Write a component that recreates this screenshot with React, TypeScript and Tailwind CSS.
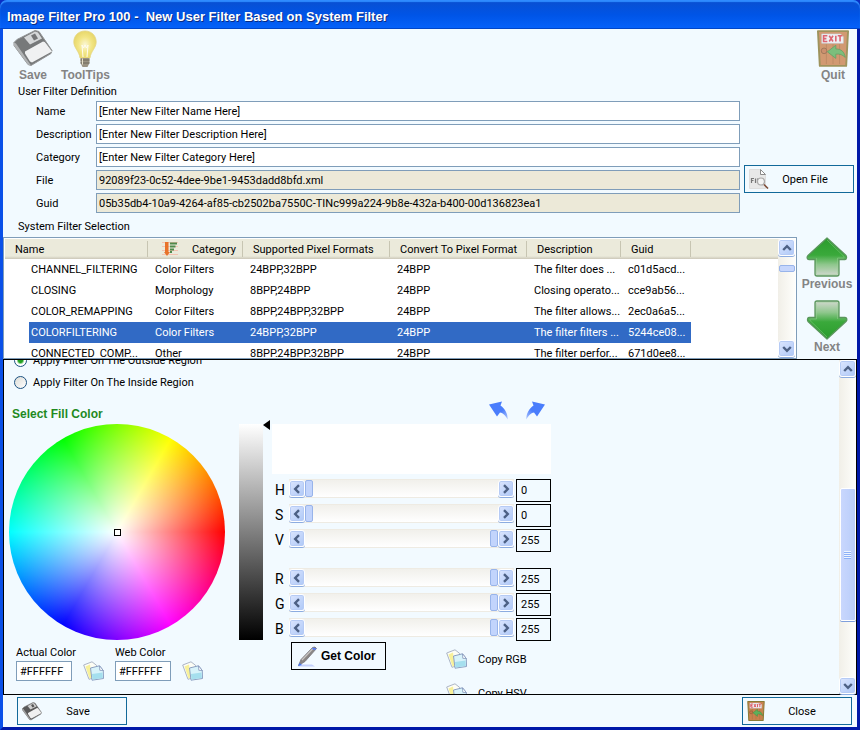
import { useState, type ReactNode } from 'react'

const filters = [
  ['CHANNEL_FILTERING', 'Color Filters', '24BPP,32BPP', '24BPP', 'The filter does ...', 'c01d5acd...'],
  ['CLOSING', 'Morphology', '8BPP,24BPP', '24BPP', 'Closing operato...', 'cce9ab56...'],
  ['COLOR_REMAPPING', 'Color Filters', '8BPP,24BPP,32BPP', '24BPP', 'The filter allows...', '2ec0a6a5...'],
  ['COLORFILTERING', 'Color Filters', '24BPP,32BPP', '24BPP', 'The filter filters ...', '5244ce08...'],
  ['CONNECTED_COMP...', 'Other', '8BPP,24BPP,32BPP', '24BPP', 'The filter perfor...', '671d0ee8...'],
]

const fields = [
  { id: 'name', label: 'Name', value: '[Enter New Filter Name Here]' },
  { id: 'description', label: 'Description', value: '[Enter New Filter Description Here]' },
  { id: 'category', label: 'Category', value: '[Enter New Filter Category Here]' },
  { id: 'file', label: 'File', value: '92089f23-0c52-4dee-9be1-9453dadd8bfd.xml', readOnly: true },
  { id: 'guid', label: 'Guid', value: '05b35db4-10a9-4264-af85-cb2502ba7550C-TINc999a224-9b8e-432a-b400-00d136823ea1', readOnly: true },
]

function FloppyIcon({ className }: { className: string }) {
  return (
    <svg viewBox="0 0 40 38" className={className}>
      <path d="M1 13 4 10 22 1l4 1 13 19-1 3-20 12-3-1L1 16Z" fill="#595959" stroke="#7c7c7c" strokeWidth="1" strokeLinejoin="round" />
      <path d="M1 13v3l14 19 3 1L3 14Z" fill="#a2a2a2" />
      <path d="m11 8 11-6 3 1 4 6-12 6Z" fill="#cfcfcf" />
      <path d="m18 6 4-2 3 5-4 2Z" fill="#555" />
      <path d="m12 22 18-10q2 0 3 2l6 8-20 11-2-1-5-8Z" fill="#f0f0f0" />
    </svg>
  )
}

function BulbIcon() {
  return (
    <svg viewBox="0 0 24 38" className="h-[38px] w-6">
      <defs>
        <radialGradient id="bulb" cx="50%" cy="52%" r="55%">
          <stop offset="0" stopColor="#fbf7d8" />
          <stop offset=".55" stopColor="#f2e583" />
          <stop offset="1" stopColor="#e6d568" />
        </radialGradient>
      </defs>
      <path d="M12 1C5 1 .8 6 .8 12c0 6 5.400 9 6.200 16h10c.8-7 6.200-10 6.200-16C23.200 6 19 1 12 1Z" fill="url(#bulb)" stroke="#e4d682" strokeWidth=".8" />
      <path d="M10 27 9 15l1.500 3L12 15l1.500 3 1.500-3-1 12" fill="none" stroke="#fffdf0" strokeWidth="1" />
      <path d="M7.500 28h9v5l-2 4h-5l-2-4Z" fill="#9a9383" />
      <path d="M7.500 30h9M7.500 33h9" stroke="#6f685a" />
      <path d="M9.500 28.500v6" stroke="#e6dfc8" />
    </svg>
  )
}

function ExitIcon({ className }: { className: string }) {
  return (
    <svg viewBox="0 0 34 39" className={className}>
      <path d="M1 1h32l-2 37H3Z" fill="#c9824f" stroke="#8a7a35" strokeWidth="2" strokeLinejoin="round" />
      <path d="M10 15v21M17 15v21M24 15v21" stroke="#b06f40" />
      <path d="M5 4h20l3 3v7H5Z" fill="#eef0f2" stroke="#b9c3cc" strokeWidth=".6" />
      <path d="M11 6H7v6h4M7 9h3M13 6l4 6M17 6l-4 6M20 6v6M22 6h5M24.500 6v6" fill="none" stroke="#d9414f" strokeWidth="1.700" />
      <circle cx="7.500" cy="22" r="3" fill="#c2764a" stroke="#8b5733" />
      <path d="m11 23 9-7v4c6 0 9 3 10 9-3-3-6-4-10-3.500V30Z" fill="#5fb05c" stroke="#3c8a3d" strokeWidth=".8" />
    </svg>
  )
}

function FileSearchIcon() {
  return (
    <svg viewBox="0 0 20 20" className="size-5">
      <path d="M.5.500h11l5 5v14H.5Z" fill="#e8e8e8" stroke="#dedede" />
      <path d="M11.500.500v5h5Z" fill="#fff" stroke="#8b8b8b" />
      <path d="M5 9.500H2.500V14M2.500 11.500H4.500M6.500 9.500V14M8.500 9.500v4.500" fill="none" stroke="#777" strokeWidth="1.200" />
      <circle cx="12" cy="12.500" r="3.500" fill="#f4f4f4" stroke="#aaa" strokeWidth="1.200" />
      <path d="m15 15.500 4 4" stroke="#7c4a35" strokeWidth="1.600" />
    </svg>
  )
}

function CopyIcon() {
  return (
    <svg viewBox="0 0 21 20" className="h-5 w-[21px]">
      <path d="M.7 4 9 .8l4.500 3.500 1 11-8.500 3Z" fill="#fdfdf5" stroke="#a3adc0" strokeWidth=".9" />
      <path d="m2.500 5.500 4.500-2 1.500 13.500-2 .5Z" fill="#f8f19a" />
      <path d="m7.500 7 9-2.200 3.800 4.700.2 8-11.500 1.700Z" fill="#d8f3fa" stroke="#8296bb" strokeWidth=".9" />
      <path d="m9 13 10.500-1.500.3 5.500-10.300 1.600Z" fill="#a5dfee" />
      <path d="m16.500 4.800.3 4.500 3.500.2Z" fill="#fff" stroke="#8296bb" strokeWidth=".8" />
    </svg>
  )
}

function GreenArrow({ down = false }: { down?: boolean }) {
  return (
    <svg viewBox="0 0 42 40" className={down ? 'h-10 w-[42px] rotate-180' : 'h-10 w-[42px]'}>
      <defs>
        <linearGradient id="arrow" x1="0" y1="0" x2="0" y2="1">
          <stop offset="0" stopColor="#2a9c2c" />
          <stop offset=".45" stopColor="#3aa93b" />
          <stop offset=".7" stopColor="#8fc78d" />
          <stop offset="1" stopColor="#d3d8d0" />
        </linearGradient>
      </defs>
      <path d="M21 1 40 18.500c1 1.500.5 4-1 4h-6V37q0 2-2 2H11q-2 0-2-2V22.500H3c-2 0-2.500-2.500-1-4Z" fill="url(#arrow)" stroke="#5a965c" strokeWidth="1.300" strokeLinejoin="round" />
      <path d="M21 3 38 19.500c.3.800 0 1.500-.6 1.500H31.500V36.500q0 1-1 1h-19q-1 0-1-1V21" fill="none" stroke="#9fd29b" strokeWidth=".7" opacity=".6" />
    </svg>
  )
}

function CurvedArrow({ flip = false }: { flip?: boolean }) {
  return (
    <svg viewBox="0 0 20 19" className={flip ? 'h-[19px] w-5 -scale-x-100' : 'h-[19px] w-5'}>
      <defs>
        <linearGradient id="curve" x1="0" y1="0" x2="1" y2="1">
          <stop offset=".6" stopColor="#4a7dfc" />
          <stop offset="1" stopColor="#b4c9fb" />
        </linearGradient>
      </defs>
      <path d="M0 3.500 13 .5 11.500 4.500C16 8 18.700 12 18.700 18.500 16.500 14.500 13.500 11.500 11 11.500L8 15.500Z" fill="url(#curve)" />
    </svg>
  )
}

function PenIcon() {
  return (
    <svg viewBox="0 0 21 21" className="size-[21px]">
      <path d="M1 20.500h17l-3-2H3Z" fill="#c3d0fc" />
      <path d="M1.500 19.500 4 13.500 15.500 1.500q3-1.500 4 1L8 15.500Z" fill="#8a8684" stroke="#77767c" strokeWidth=".8" />
      <path d="m5 14 11-11.500" stroke="#c9c6c4" strokeWidth="1.200" />
      <path d="M1 20 2.500 17l2.500 2Z" fill="#4674f0" />
      <path d="m16 1.500 3.500 1-1.500 1.800-3-1.300Z" fill="#5b7ef0" />
    </svg>
  )
}

function SortIcon() {
  return (
    <svg viewBox="0 0 16 16" className="h-4 w-4">
      <path d="M0 1.500h16M0 5.500h16M0 9.500h16M0 13.500h16" stroke="#f3c3b0" />
      <path d="M3 1h3.500v10H8l-3 4-3-4h1Z" fill="#e8722a" />
      <path d="M8 2.500h7M8 5.500h5.500M8 8.500h4M8 11h2" stroke="#4f8a4c" strokeWidth="1.800" />
    </svg>
  )
}

function Chevron({ className = '' }: { className?: string }) {
  return (
    <svg viewBox="0 0 10 10" className={`size-[10px] ${className}`}>
      <path d="m1.200 7 3.800-3.800L8.800 7" fill="none" stroke="#4d6185" strokeWidth="2.400" />
    </svg>
  )
}

function ScrollButton({ label, turn }: { label: string; turn?: string }) {
  return (
    <button
      aria-label={label}
      className="flex size-[17px] shrink-0 items-center justify-center rounded-[3px] border border-white bg-linear-to-br from-[#dce6fe] to-[#aec8f7] shadow-[inset_0_0_0_1px_#b6cbf5,0_1px_0_#8cace0]"
    >
      <Chevron className={turn} />
    </button>
  )
}

function ScrollTrack({ children }: { children: ReactNode }) {
  return (
    <div className="flex w-[17px] shrink-0 flex-col items-center bg-linear-to-r from-[#f1efe8] to-[#fefefb]">
      <ScrollButton label="Scroll up" />
      {children}
      <ScrollButton label="Scroll down" turn="rotate-180" />
    </div>
  )
}

function ToolButton({ label, children }: { label: string; children: ReactNode }) {
  return (
    <button className="flex flex-col items-center font-['Liberation_Sans',Arial,sans-serif] text-[12px] leading-[15px] font-bold text-[#848484]">
      {children}
      {label}
    </button>
  )
}

function ActionButton({ label, children }: { label: string; children: ReactNode }) {
  return (
    <button className="flex h-7 w-[110px] items-center border border-[#12699a] pl-1">
      {children}
      <span className="flex-1 pr-3 text-center">{label}</span>
    </button>
  )
}

function Channel({ name, initial, max = 255 }: { name: string; initial: number; max?: number }) {
  const [value, setValue] = useState(initial)
  const set = (v: number) => setValue(Math.max(0, Math.min(max, v || 0)))
  return (
    <div className="flex h-[23px] items-start">
      <label htmlFor={`value-${name}`} className="w-[17px] pl-[3px] text-[14px] leading-[23px]">{name}</label>
      <div className="flex flex-1 items-center border-y border-[#eeebe3] bg-linear-to-b from-[#f1f0eb] to-white">
        <button aria-label={`Decrease ${name}`} onClick={() => set(value - 1)} className="flex h-[17px] w-4 items-center justify-center rounded-[3px] border border-white bg-linear-to-br from-[#dce6fe] to-[#aec8f7] shadow-[inset_0_0_0_1px_#b6cbf5,0_1px_0_#8cace0]">
          <Chevron className="-rotate-90" />
        </button>
        <input
          type="range"
          aria-label={`${name} slider`}
          min={0}
          max={max}
          value={value}
          onChange={(e) => set(+e.target.value)}
          className="h-[17px] min-w-0 flex-1 appearance-none bg-transparent [&::-webkit-slider-thumb]:h-[17px] [&::-webkit-slider-thumb]:w-[8px] [&::-webkit-slider-thumb]:appearance-none [&::-webkit-slider-thumb]:rounded-[2px] [&::-webkit-slider-thumb]:border [&::-webkit-slider-thumb]:border-[#98b4ea] [&::-webkit-slider-thumb]:bg-[#c2d4fc]"
        />
        <button aria-label={`Increase ${name}`} onClick={() => set(value + 1)} className="flex h-[17px] w-4 items-center justify-center rounded-[3px] border border-white bg-linear-to-br from-[#dce6fe] to-[#aec8f7] shadow-[inset_0_0_0_1px_#b6cbf5,0_1px_0_#8cace0]">
          <Chevron className="rotate-90" />
        </button>
      </div>
      <input
        id={`value-${name}`}
        value={value}
        onChange={(e) => set(+e.target.value)}
        className="ml-[2px] h-[23px] w-[35px] border border-black px-1"
      />
    </div>
  )
}

function HexField({ id, label }: { id: string; label: string }) {
  return (
    <div className="w-[99px]">
      <label htmlFor={id} className="block leading-[17px] whitespace-nowrap">{label}</label>
      <div className="flex items-center gap-[11px]">
        <input id={id} defaultValue="#FFFFFF" className="h-5 w-14 border border-[#7f9db9] bg-white px-[3px]" />
        <button aria-label={`Copy ${label}`}><CopyIcon /></button>
      </div>
    </div>
  )
}

function FilterTable() {
  const [selected, setSelected] = useState(3)
  return (
    <div className="flex h-[122px] min-w-0 flex-1 border border-[#7f9db9] bg-white p-px">
      <div className="min-w-0 flex-1 overflow-hidden bg-[linear-gradient(#ebeadb_0_17px,#cbc7b8_20px,#fff_20px)]">
        <table className="w-[686px] table-fixed border-collapse text-left whitespace-nowrap">
          <colgroup>
            <col className="w-6" />
            <col className="w-[119px]" />
            <col className="w-[95px]" />
            <col className="w-[147px]" />
            <col className="w-[137px]" />
            <col className="w-[94px]" />
            <col className="w-[70px]" />
          </colgroup>
          <thead>
            <tr className="h-5 [&_span]:flex [&_span]:h-4 [&_span]:items-center [&_span]:border-r [&_span]:border-[#c7c5b2] [&_span]:pl-[10px] [&_th]:p-0 [&_th]:font-normal">
              <th colSpan={2}><span>Name</span></th>
              <th><span className="justify-between pr-[6px]"><i className="pl-1"><SortIcon /></i>Category</span></th>
              <th><span>Supported Pixel Formats</span></th>
              <th><span>Convert To Pixel Format</span></th>
              <th><span>Description</span></th>
              <th><span>Guid</span></th>
            </tr>
          </thead>
          <tbody>
            {filters.map((row, i) => (
              <tr key={row[0]} onClick={() => setSelected(i)} className="h-[21px]">
                <td className="p-0" />
                {row.map((cell, j) => (
                  <td key={j} className={`overflow-hidden py-0 pr-0 ${j === 0 ? 'pl-[2px]' : 'pl-[7px]'} ${i === selected ? 'bg-[#316ac5] text-white' : ''}`}>
                    {cell}
                  </td>
                ))}
              </tr>
            ))}
          </tbody>
        </table>
      </div>
      <ScrollTrack>
        <div className="mt-[9px] h-[7px] w-4 rounded-[2px] border border-[#98b4ea] bg-[#c6d6fc]" />
        <div className="flex-1" />
      </ScrollTrack>
    </div>
  )
}

export default function App() {
  return (
    <div className="flex h-screen flex-col overflow-hidden bg-[#0a2ec4] font-[Roboto,'Liberation_Sans',sans-serif] text-[11px] leading-[15px] text-black">
      <header className="flex h-[29px] shrink-0 items-center rounded-t-[7px] bg-linear-to-b from-[#0a4fd0] via-[#0054e6] to-[#0562fb] px-[7px] pt-1 shadow-[inset_0_2px_1px_#2f8bff,inset_0_-1px_0_#0046c8]">
        <h1 className="font-['Liberation_Sans',Arial,sans-serif] text-[13px] font-bold whitespace-pre text-white [text-shadow:1px_1px_#0a2a80]">Image Filter Pro 100 -  New User Filter Based on System Filter</h1>
      </header>

      <main className="flex min-h-0 flex-1 flex-col border-x-[3px] border-b-[3px] border-r-[#0018a8] border-b-[#0018a8] border-l-[#0a50e8] bg-[#f2faff]">
        <div className="flex h-[55px] shrink-0 justify-between pr-2 pl-[10px]">
          <div className="flex gap-2">
            <ToolButton label="Save"><FloppyIcon className="h-[39px] w-10 opacity-80" /></ToolButton>
            <ToolButton label="ToolTips"><div className="flex h-[39px] items-end"><BulbIcon /></div></ToolButton>
          </div>
          <ToolButton label="Quit"><ExitIcon className="h-[39px] w-8 opacity-80" /></ToolButton>
        </div>

        <h2 className="shrink-0 pl-[15px]">User Filter Definition</h2>
        <form className="mt-[2px] flex shrink-0 items-end gap-1 pr-[3px] pl-[33px]" onSubmit={(e) => e.preventDefault()}>
          <div className="flex flex-1 flex-col gap-[3px]">
            {fields.map((f) => (
              <div key={f.id} className="flex h-5 items-center">
                <label htmlFor={f.id} className="w-[60px]">{f.label}</label>
                <input
                  id={f.id}
                  defaultValue={f.value}
                  readOnly={f.readOnly}
                  className="h-5 flex-1 border border-[#7f9db9] bg-white px-[2px] read-only:bg-[#ece9d8]"
                />
              </div>
            ))}
          </div>
          <div className="mb-5">
            <ActionButton label="Open File"><FileSearchIcon /></ActionButton>
          </div>
        </form>

        <h2 className="mt-[6px] shrink-0 pb-[3px] pl-[15px]">System Filter Selection</h2>
        <section className="flex shrink-0">
          <FilterTable />
          <div className="flex w-[60px] flex-col items-center gap-2">
            <ToolButton label="Previous"><GreenArrow /></ToolButton>
            <ToolButton label="Next"><GreenArrow down /></ToolButton>
          </div>
        </section>

        <section className="flex min-h-0 flex-1 border border-black">
          <div className="min-w-0 flex-1 overflow-hidden">
            <fieldset className="-mt-[11px] pl-[10px]">
              {['Outside', 'Inside'].map((side) => (
                <label key={side} className="flex h-[22px] items-center gap-[6px]">
                  <input
                    type="radio"
                    name="region"
                    defaultChecked={side === 'Outside'}
                    className="size-[13px] appearance-none rounded-full border border-[#1d5281] bg-linear-to-br from-[#dcdcd7] to-white checked:bg-[radial-gradient(circle,#21a121_0_2px,#fff_4px)]"
                  />
                  Apply Filter On The {side} Region
                </label>
              ))}
            </fieldset>

            <div className="mt-2 flex pl-[5px]">
              <div className="w-[216px]">
                <h3 className="h-[23px] pt-[6px] pl-[3px] font-['Liberation_Sans',Arial,sans-serif] text-[12px] font-bold text-[#1f8a1f]">Select Fill Color</h3>
                <div className="flex size-[216px] items-center justify-center rounded-full [background:radial-gradient(closest-side,#fff,transparent),conic-gradient(from_90deg,#f00,#f0f,#00f,#0ff,#0f0,#ff0,#f00)]">
                  <div className="size-[7px] border border-black bg-white" />
                </div>
                <div className="mt-[4px] flex pl-[7px]">
                  <HexField id="actual" label="Actual Color" />
                  <HexField id="web" label="Web Color" />
                </div>
              </div>

              <div className="mt-[23px] ml-[14px] flex h-[216px]">
                <div className="w-6 bg-linear-to-b/srgb from-white to-black" />
                <svg viewBox="0 0 9 10" className="-mt-1 h-[10px] w-[9px]"><path d="M0 5 7 0v10Z" /></svg>
              </div>

              <div className="w-[279px]">
                <div className="flex h-[23px] items-start justify-end gap-4 pr-[6px]">
                  <button aria-label="Undo"><CurvedArrow /></button>
                  <button aria-label="Redo"><CurvedArrow flip /></button>
                </div>
                <div className="mb-[5px] h-[50px] bg-white" />
                <div className="flex flex-col gap-[2px]">
                  <Channel name="H" initial={0} max={360} />
                  <Channel name="S" initial={0} />
                  <Channel name="V" initial={255} />
                </div>
                <div className="mt-4 flex flex-col gap-[2px]">
                  <Channel name="R" initial={255} />
                  <Channel name="G" initial={255} />
                  <Channel name="B" initial={255} />
                </div>
                <div className="mt-px flex items-start justify-between pl-[19px]">
                  <button className="flex h-7 w-[95px] items-center gap-[3px] border border-black pl-[5px] font-['Liberation_Sans',Arial,sans-serif] text-[12px] font-bold">
                    <PenIcon />
                    Get Color
                  </button>
                  <div className="mt-[7px] flex w-[105px] flex-col gap-[14px]">
                    <button className="flex h-5 items-center gap-[11px]"><CopyIcon />Copy RGB</button>
                    <button className="flex h-5 items-center gap-[11px]"><CopyIcon />Copy HSV</button>
                  </div>
                </div>
              </div>
            </div>
          </div>
          <ScrollTrack>
            <div className="flex-[112]" />
            <div className="flex w-4 flex-[132] flex-col items-center justify-center gap-px rounded-[2px] border border-white bg-linear-to-r from-[#c9d7fd] to-[#b9cdfa] shadow-[0_1px_0_#7f9fdc]">
              <i className="h-px w-[7px] bg-[#eef4fe] shadow-[0_1px_0_#8cb0f8]" />
              <i className="h-px w-[7px] bg-[#eef4fe] shadow-[0_1px_0_#8cb0f8]" />
              <i className="h-px w-[7px] bg-[#eef4fe] shadow-[0_1px_0_#8cb0f8]" />
              <i className="h-px w-[7px] bg-[#eef4fe] shadow-[0_1px_0_#8cb0f8]" />
            </div>
            <div className="flex-[56]" />
          </ScrollTrack>
        </section>

        <footer className="flex h-8 shrink-0 items-center justify-between pr-[5px] pl-[14px]">
          <ActionButton label="Save"><FloppyIcon className="h-[19px] w-5" /></ActionButton>
          <ActionButton label="Close"><ExitIcon className="h-5 w-[18px]" /></ActionButton>
        </footer>
      </main>
    </div>
  )
}
